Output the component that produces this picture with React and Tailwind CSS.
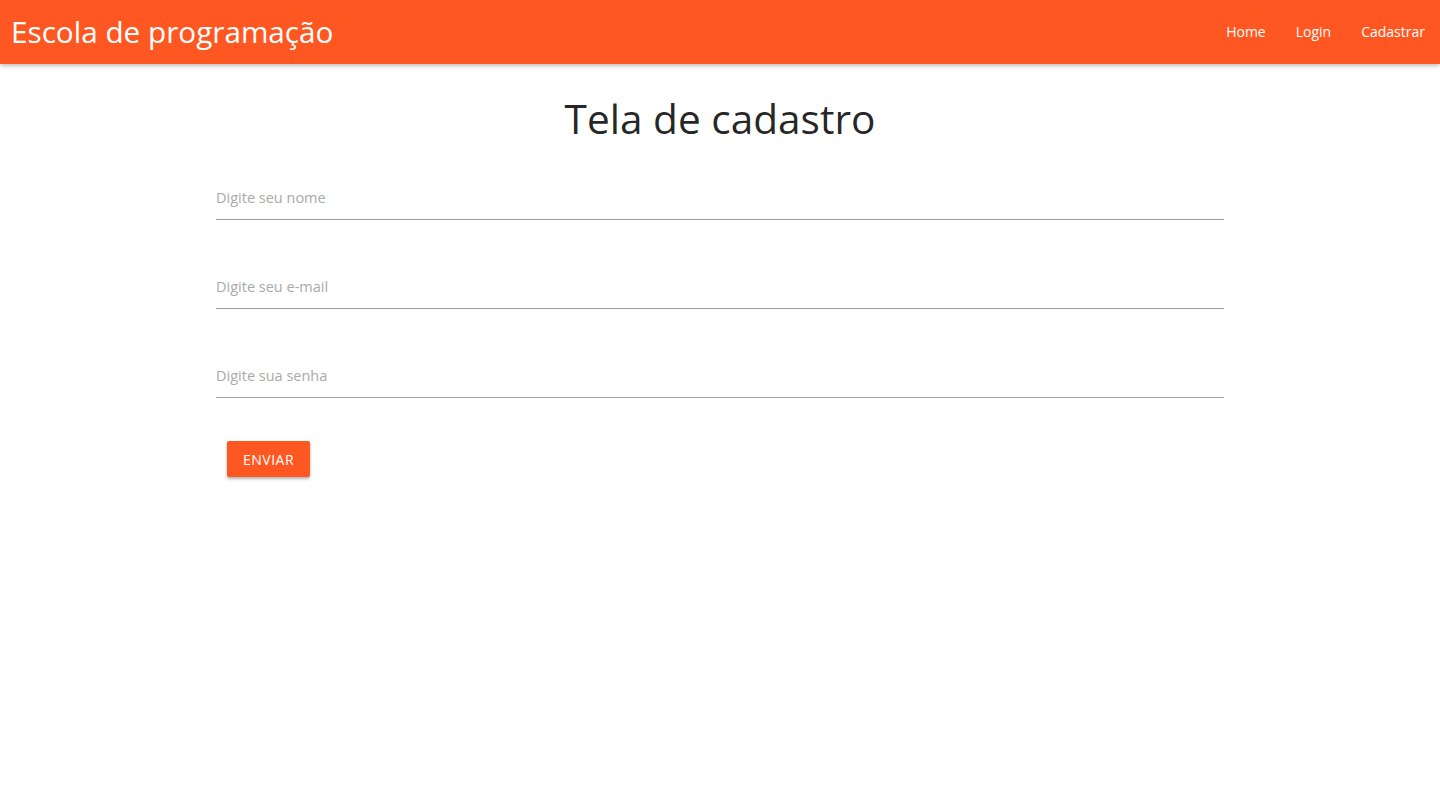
import React from 'react';

const fields = ['Digite seu nome', 'Digite seu e-mail', 'Digite sua senha'];

export default function App() {
  return (
    <div className="min-h-screen bg-white font-['Open_Sans',sans-serif]">
      <nav className="h-16 bg-[#ff5722] flex items-center justify-between shadow-[0_2px_4px_rgba(0,0,0,0.25)] relative z-10">
        <a className="pl-[11px] text-white text-[29.7px] leading-[64px]">Escola de programação</a>
        <ul className="flex">
          <li><a className="block px-[15px] text-white text-[14px] leading-[64px]">Home</a></li>
          <li><a className="block px-[15px] text-white text-[14px] leading-[64px]">Login</a></li>
          <li><a className="block px-[15px] text-white text-[14px] leading-[64px]">Cadastrar</a></li>
        </ul>
      </nav>

      <div className="w-[1008px] mx-auto">
        <h3 className="pt-[29px] h-[79px] leading-[51px] text-center text-[40.6px] text-[rgba(0,0,0,0.87)]">
          Tela de cadastro
        </h3>
        <form className="mt-[27px] flex flex-col gap-[39px]">
          {fields.map(f => (
            <input
              key={f}
              type="text"
              placeholder={f}
              className="h-[50px] w-full border-b border-[#9e9e9e] pt-[6px] text-[14.5px] outline-none placeholder:text-[#a9a9a9]"
            />
          ))}
          <div className="pl-[11px] mt-[4px]">
            <button
              type="button"
              className="h-[36px] px-[16px] bg-[#ff5722] text-white text-[14px] uppercase tracking-[0.5px] rounded-[2px] shadow-[0_2px_3px_rgba(0,0,0,0.3)]"
            >
              Enviar
            </button>
          </div>
        </form>
      </div>
    </div>
  );
}
